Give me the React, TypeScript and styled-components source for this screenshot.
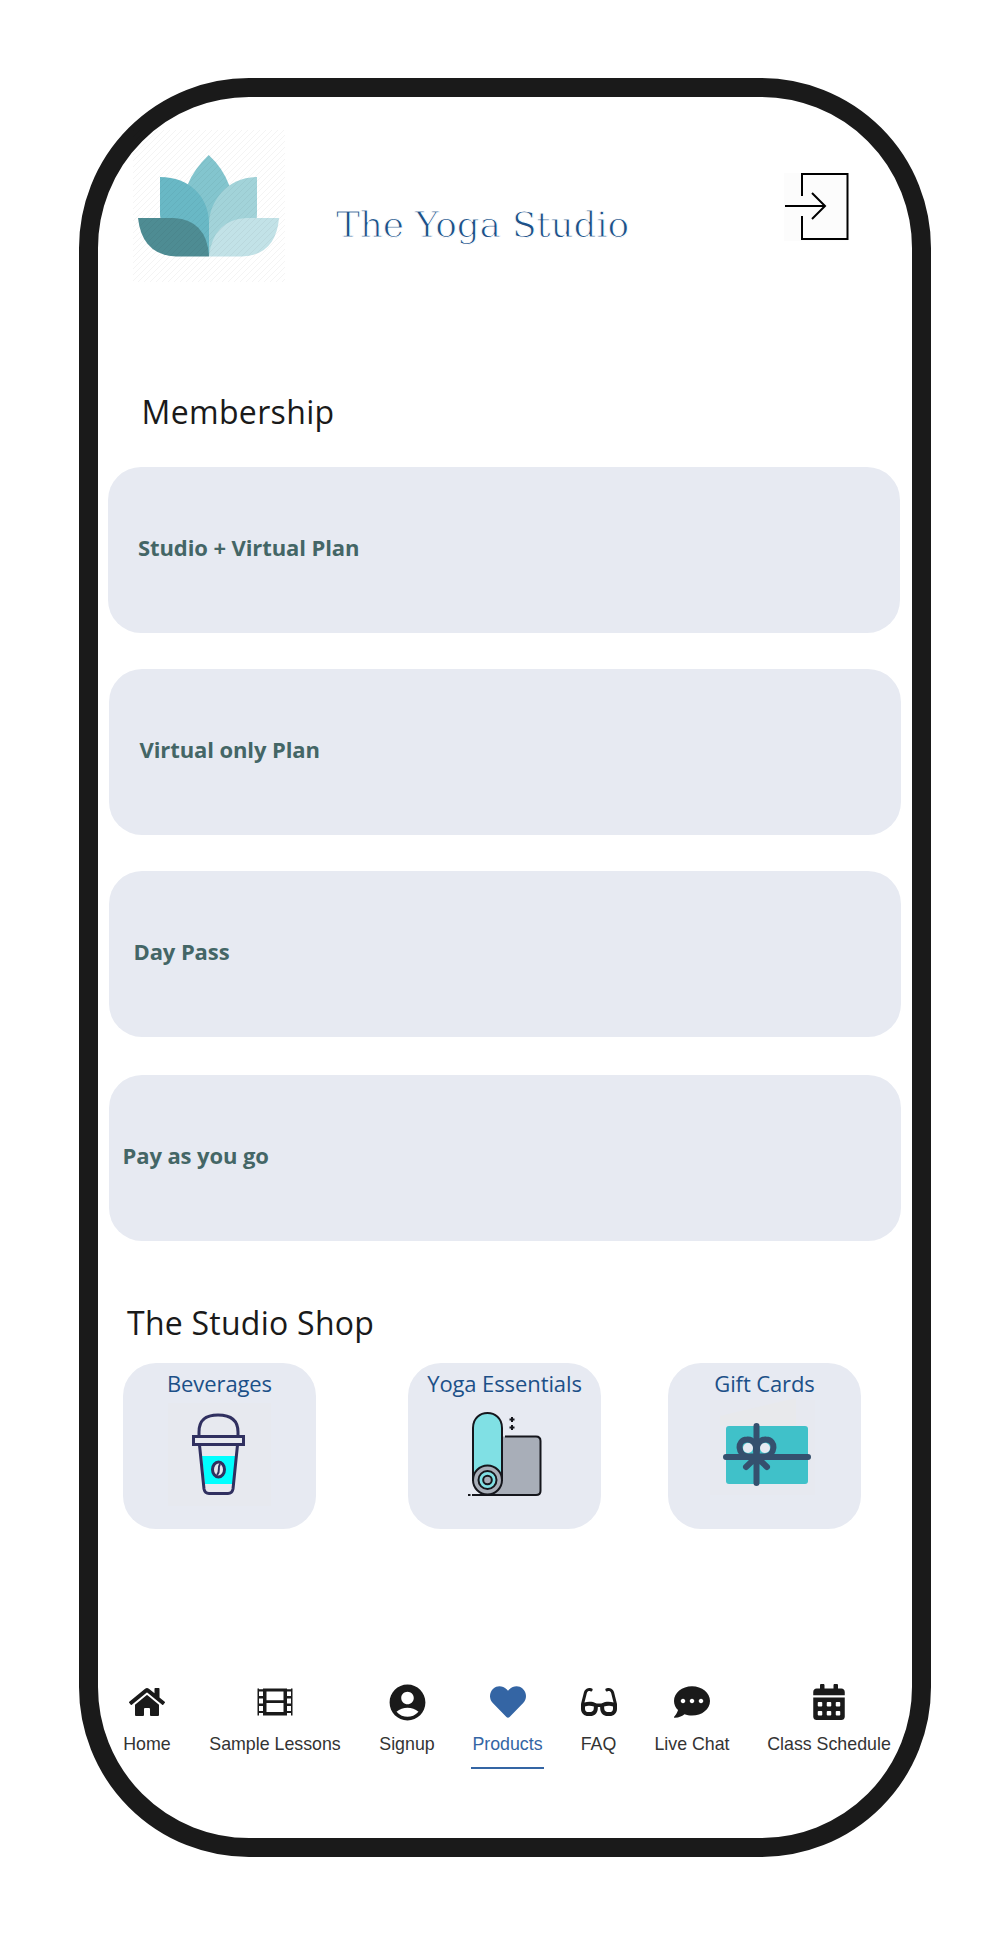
import React from "react";
import styled, { createGlobalStyle } from "styled-components";
import { FaHome, FaHeart, FaGlasses, FaCommentDots, FaCalendarAlt } from "react-icons/fa";
import { MdAccountCircle } from "react-icons/md";

const GlobalStyle = createGlobalStyle`
  * { box-sizing: border-box; }
  body { margin: 0; background: #fff; }
`;

const Page = styled.main`
  width: 1007px;
  height: 1934px;
  padding: 77.5px 76.5px 77.5px 78.5px;
  background: #fff;
`;

const Phone = styled.div`
  width: 852px;
  height: 1779px;
  border: 19px solid #1a1a1a;
  border-radius: 170px;
  background: #fff;
  display: flex;
  flex-direction: column;
  font-family: "Open Sans", "Noto Sans", sans-serif;
`;

const Header = styled.header`
  display: flex;
  align-items: flex-start;
  height: 293.5px;
  padding: 32.5px 0 0 34.5px;
`;

const Logo = styled.svg`
  width: 154px;
  height: 154px;
  flex: none;
`;

const Title = styled.h1`
  margin: 69px 0 0 50px;
  width: 300px;
  font-family: "DejaVu Serif", serif;
  font-size: 36px;
  font-weight: 400;
  line-height: 54px;
  letter-spacing: -0.25px;
  white-space: nowrap;
  color: #1c5088;
  -webkit-text-stroke: 1px #fff;
`;

const LoginButton = styled.button`
  margin: 41px 0 0 148px;
  padding: 0;
  border: 0;
  background: none;
  line-height: 0;
`;

const Heading = styled.h2<{ $indent: number; $tracking: number }>`
  margin: 0 0 0 ${(p) => p.$indent}px;
  font-size: 32px;
  line-height: 44px;
  font-weight: 400;
  letter-spacing: ${(p) => p.$tracking}px;
  color: #1a1a1a;
`;

const Plans = styled.div`
  display: flex;
  flex-direction: column;
  margin: 33px 0 0 10px;
`;

const Plan = styled.button<{ $pad: number; $gap: number; $shift?: number }>`
  width: 792px;
  height: 166px;
  margin: 0 0 ${(p) => p.$gap}px ${(p) => p.$shift ?? 1}px;
  padding: 0 0 6px ${(p) => p.$pad}px;
  border: 0;
  border-radius: 33px;
  background: #e7eaf2;
  font: 700 22px/30px "Open Sans", sans-serif;
  letter-spacing: -0.1px;
  color: #446666;
  text-align: left;
`;

const Shop = styled.div`
  display: flex;
  margin: 18px 0 0 25.5px;
`;

const ShopCard = styled.button<{ $gap: number }>`
  display: flex;
  flex-direction: column;
  align-items: center;
  width: 193px;
  height: 166px;
  margin: 0 ${(p) => p.$gap}px 0 0;
  padding: 5px 0 0;
  border: 0;
  border-radius: 33px;
  background: #e7eaf2;
  font: 400 22px/30px "Open Sans", sans-serif;
  letter-spacing: -0.1px;
  color: #1c5088;
  white-space: nowrap;
`;

const Art = styled.svg`
  width: 193px;
  height: 131px;
  flex: none;
`;

const Nav = styled.nav`
  display: flex;
  margin: 155px 0 0 26.5px;
`;

const NavItem = styled.a<{ $active?: boolean; $width: number; $gap: number }>`
  display: flex;
  flex: none;
  flex-direction: column;
  align-items: center;
  width: ${(p) => p.$width}px;
  height: 85px;
  margin-right: ${(p) => p.$gap}px;
  border-bottom: 2px solid ${(p) => (p.$active ? "#3465a4" : "transparent")};
  color: ${(p) => (p.$active ? "#3465a4" : "#1a1a1a")};
  font: 17.8px/24px "Liberation Sans", Arial, sans-serif;
  white-space: nowrap;
`;

const IconSlot = styled.span`
  display: flex;
  align-items: center;
  justify-content: center;
  height: 36px;
  margin-bottom: 12px;

  svg { flex: none; }
`;

const Label = styled.span<{ $active?: boolean }>`
  color: ${(p) => (p.$active ? "#3465a4" : "#333")};
`;

const Lotus = () => (
  <Logo viewBox="132 129 154 154">
    <defs>
      <pattern id="hatch" width="6" height="6" patternUnits="userSpaceOnUse">
        <path d="M-1 1 1-1M0 6 6 0M5 7 7 5" stroke="#000" strokeOpacity=".045" strokeWidth="1" />
      </pattern>
    </defs>
    <path d="M208.700 155Q223 168 229.500 186L222 225 208.700 256 195 225 188 184Q194 169 208.700 155Z" fill="#83c5ce" />
    <path d="M160 177C190 177 209 197 209 224V256L164 224Q160 221 160 214Z" fill="#69b8c5" />
    <path d="M257 177C227 177 209 202 209 224V256L254 224Q257 221 257 214Z" fill="#a2d3d9" />
    <path d="M138 218H174Q207 220 209 256.500H176Q142 255 138 218Z" fill="#4e8c93" />
    <path d="M279 218H246Q213 220 209 256.500H242Q276 255 279 218Z" fill="#c2e2e7" />
    <rect x="133" y="130" width="152" height="152" fill="url(#hatch)" />
  </Logo>
);

const Login = () => (
  <svg width="65" height="72" viewBox="784 170 65 72" fill="none" stroke="#000" strokeWidth="2">
    <rect x="784" y="173" width="64" height="68" fill="#fcfcfc" stroke="none" />
    <path d="M802 196V174H847.500V239H802V216M785 206H825M812 193 825 206 812 219" />
  </svg>
);

const Cup = () => (
  <Art viewBox="123 1398 193 131" fill="none" stroke="#303060" strokeWidth="3">
    <rect x="168" y="1403" width="103" height="103" fill="#e7e9ef" stroke="none" />
    <path d="M202 1456H236L233 1484H205Z" fill="#00ffff" stroke="none" />
    <path d="M199 1435V1432C199 1418 208 1415 218 1415S238 1418 238 1432V1435" />
    <rect x="193.500" y="1436.500" width="50" height="8" />
    <path d="M199.500 1445 204 1489Q205 1493.500 209 1493.500H228Q232 1493.500 233 1489L237.500 1445" />
    <ellipse cx="218.500" cy="1469.500" rx="6" ry="7.500" fill="#e7e8ed" />
    <path d="M220 1464C217 1469 221 1470 217 1475" strokeWidth="2" />
  </Art>
);

const YogaMat = () => (
  <Art viewBox="408 1398 193 131" fill="none" stroke="#15161c" strokeWidth="2">
    <path d="M502 1436.500H536Q540.500 1436.500 540.500 1441V1491Q540.500 1495 536 1495H488V1436.500" fill="#a8aeb8" stroke="none" />
    <path d="M505 1436.500H536Q540.500 1436.500 540.500 1441V1491Q540.500 1495 536 1495H472M468 1495H470.500" />
    <path d="M473 1480V1428C473 1408 502 1408 502 1428V1480Z" fill="#80e0e4" />
    <circle cx="487.500" cy="1480" r="14.500" fill="#a8aeb8" />
    <circle cx="487.500" cy="1480" r="9" fill="#80e0e4" />
    <circle cx="487.500" cy="1480" r="4.300" fill="#a8aeb8" />
    <path d="M509.500 1419.500H514.500M512 1417V1422M509.500 1427.500H514.500M512 1425V1430" />
  </Art>
);

const Gift = () => (
  <Art viewBox="668 1398 193 131" fill="none" stroke="#35506e" strokeWidth="6" strokeLinecap="round">
    <rect x="710" y="1400" width="105" height="95" fill="#e7e9f0" stroke="none" />
    <path d="M720 1416 796 1398V1426H720Z" fill="#e8e9ec" stroke="none" />
    <rect x="726" y="1426" width="82" height="58" rx="3" fill="#40c1c9" stroke="none" />
    <path d="M756 1456.500H748C738 1456 736 1440 747 1439.500C753 1439 756.500 1444 756.500 1456.500C756.500 1444 760 1439 766 1439.500C777 1440 775 1456 765 1456.500Z" />
    <circle cx="748" cy="1448" r="5" fill="#e7eaf2" stroke="none" />
    <circle cx="765" cy="1448" r="5" fill="#e7eaf2" stroke="none" />
    <path d="M756.500 1426V1483M726 1457H808M756.500 1457 746 1467M756.500 1457 767 1467" />
  </Art>
);

const Film = () => (
  <svg width="36" height="36" viewBox="0 0 36 36">
    <path fillRule="evenodd" fill="#1a1a1a" d="M.5 4.500H35.500V31.500H.500ZM2 7.500V12H6V7.500ZM2 14.500V19.500H6V14.500ZM2 22V27H6V22ZM2 29V31.500H6V29ZM9.500 7.500V16.300H26.500V7.500ZM9.500 19V28H26.500V19ZM30 7.500V12H34V7.500ZM30 14.500V19.500H34V14.500ZM30 22V27H34V22ZM30 29V31.500H34V29ZM2 4.500H6V5.300H2ZM30 4.500H34V5.300H30Z" />
  </svg>
);

type Item = { label: string; icon: React.ReactNode; width: number; gap: number; active?: boolean };

const navItems: Item[] = [
  { label: "Home", icon: <FaHome size={36} />, width: 46, gap: 39 },
  { label: "Sample Lessons", icon: <Film />, width: 132, gap: 38 },
  { label: "Signup", icon: <MdAccountCircle size={43} />, width: 56, gap: 36 },
  { label: "Products", icon: <FaHeart size={36} />, width: 73, gap: 36, active: true },
  { label: "FAQ", icon: <FaGlasses size={36} />, width: 37, gap: 37 },
  { label: "Live Chat", icon: <FaCommentDots size={36} />, width: 76, gap: 37 },
  { label: "Class Schedule", icon: <FaCalendarAlt size={36} />, width: 124, gap: 0 },
];

export default function App() {
  return (
    <>
      <GlobalStyle />
      <Page>
        <Phone>
          <Header>
            <Lotus />
            <Title>The Yoga Studio</Title>
            <LoginButton aria-label="Log in"><Login /></LoginButton>
          </Header>
          <Heading $indent={44} $tracking={0.35}>Membership</Heading>
          <Plans>
            <Plan $pad={30.5} $gap={36} $shift={0}>Studio + Virtual Plan</Plan>
            <Plan $pad={31} $gap={36}>Virtual only Plan</Plan>
            <Plan $pad={25} $gap={38}>Day Pass</Plan>
            <Plan $pad={14} $gap={60}>Pay as you go</Plan>
          </Plans>
          <Heading $indent={29.5} $tracking={0.25}>The Studio Shop</Heading>
          <Shop>
            <ShopCard $gap={92}>Beverages<Cup /></ShopCard>
            <ShopCard $gap={67}>Yoga Essentials<YogaMat /></ShopCard>
            <ShopCard $gap={0}>Gift Cards<Gift /></ShopCard>
          </Shop>
          <Nav>
            {navItems.map((item) => (
              <NavItem key={item.label} $width={item.width} $gap={item.gap} $active={item.active}>
                <IconSlot>{item.icon}</IconSlot>
                <Label $active={item.active}>{item.label}</Label>
              </NavItem>
            ))}
          </Nav>
        </Phone>
      </Page>
    </>
  );
}
